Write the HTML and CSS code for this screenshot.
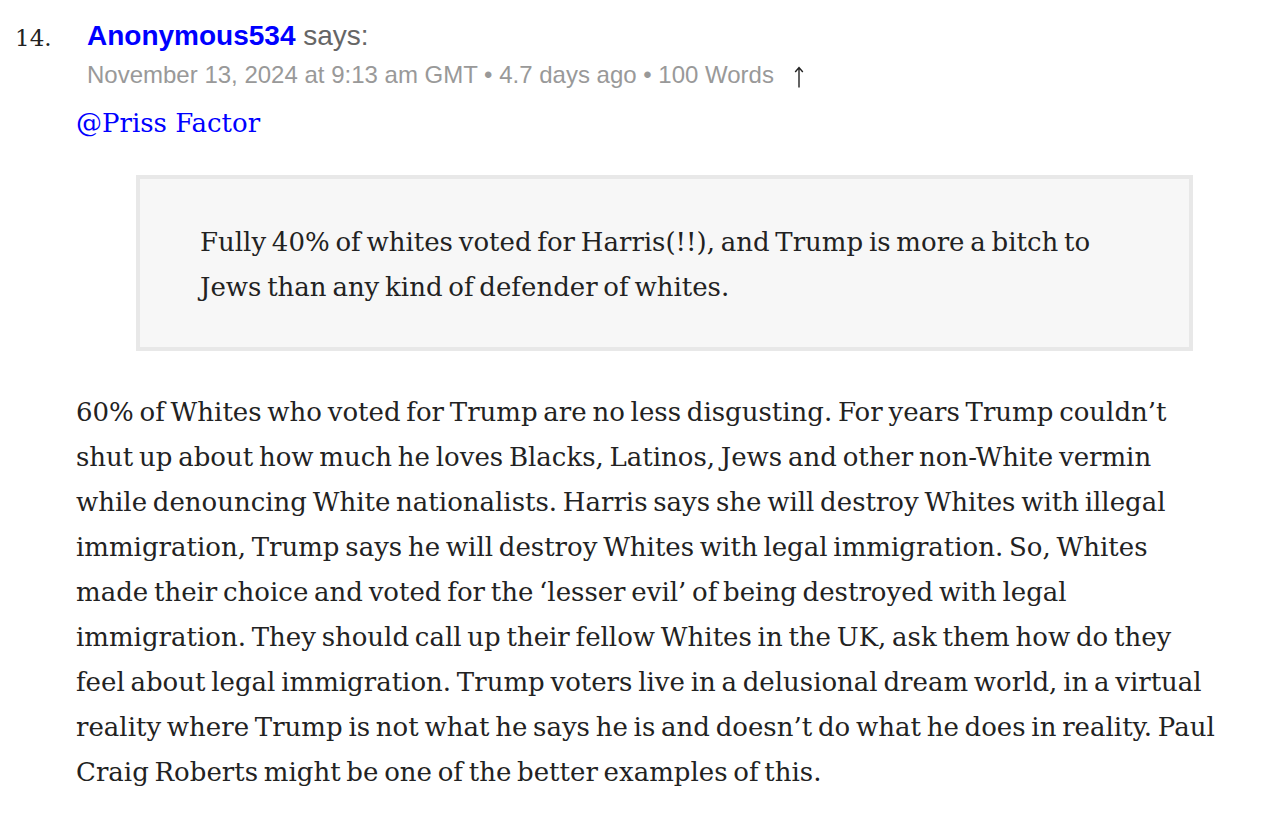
FILE: index.html
```html
<!DOCTYPE html>
<html>
<head>
<meta charset="utf-8">
<link rel="stylesheet" href="styles.css">
</head>
<body>
<div class="comment">
  <div class="comment-head">
    <span class="num">14.</span>
    <div class="head-info">
      <div class="author-line"><a class="author" href="#">Anonymous534</a> <span class="says">says:</span></div>
      <div class="meta">November 13, 2024 at 9:13 am GMT • 4.7 days ago • 100 Words <a class="up" href="#"><svg width="10" height="22" viewBox="0 0 10 22"><path d="M5 1.5 L5 21.5 M1.2 6 L5 1.5 L8.8 6" fill="none" stroke="#222" stroke-width="1.4"/></svg></a></div>
    </div>
  </div>
  <div class="comment-body">
    <p class="reply"><a href="#">@Priss Factor</a></p>
    <blockquote class="quote">
      <p>Fully 40% of whites voted for Harris(!!), and Trump is more a bitch to Jews than any kind of defender of whites.</p>
    </blockquote>
    <p class="text">60% of Whites who voted for Trump are no less disgusting. For years Trump couldn’t shut up about how much he loves Blacks, Latinos, Jews and other non-White vermin while denouncing White nationalists. Harris says she will destroy Whites with illegal immigration, Trump says he will destroy Whites with legal immigration. So, Whites made their choice and voted for the ‘lesser evil’ of being destroyed with legal immigration. They should call up their fellow Whites in the UK, ask them how do they feel about legal immigration. Trump voters live in a delusional dream world, in a virtual reality where Trump is not what he says he is and doesn’t do what he does in reality. Paul Craig Roberts might be one of the better examples of this.</p>
  </div>
</div>
</body>
</html>
```
FILE: styles.css
```css
html, body {
  margin: 0;
  padding: 0;
  background: #fff;
}
body {
  font-family: "DejaVu Serif", Georgia, serif;
  color: #222;
}
.comment {
  padding: 16px 47px 0 0;
}
.comment-head {
  display: flex;
  align-items: flex-start;
}
.num {
  width: 87px;
  padding-left: 15px;
  box-sizing: border-box;
  font-family: "DejaVu Serif", serif;
  font-size: 23px;
  line-height: 44px;
  color: #222;
}
.head-info {
  font-family: "Liberation Sans", Arial, sans-serif;
  white-space: nowrap;
}
.author-line {
  font-size: 28px;
  line-height: 40px;
}
.author {
  color: #0000ff;
  font-weight: bold;
  text-decoration: none;
}
.says {
  color: #666;
}
.meta {
  font-size: 24px;
  line-height: 38px;
  color: #999;
}
.up {
  display: inline-block;
  margin-left: 13px;
  vertical-align: -5px;
  line-height: 0;
}
.comment-body {
  margin-left: 76px;
}
.reply {
  margin: 9px 0 0;
  font-size: 26px;
  line-height: 40px;
}
.reply a {
  color: #0000ff;
  text-decoration: none;
}
.quote {
  margin: 32px 27px 0 60px;
  border: 4px solid #e8e8e8;
  background: #f7f7f7;
  padding: 41px 60px 37px 60px;
}
.quote p {
  margin: 0;
  font-size: 26px;
  line-height: 45px;
  word-spacing: -2.5px;
}
.text {
  margin: 39px 0 0;
  font-size: 26px;
  line-height: 45px;
  word-spacing: -2.5px;
}
```
